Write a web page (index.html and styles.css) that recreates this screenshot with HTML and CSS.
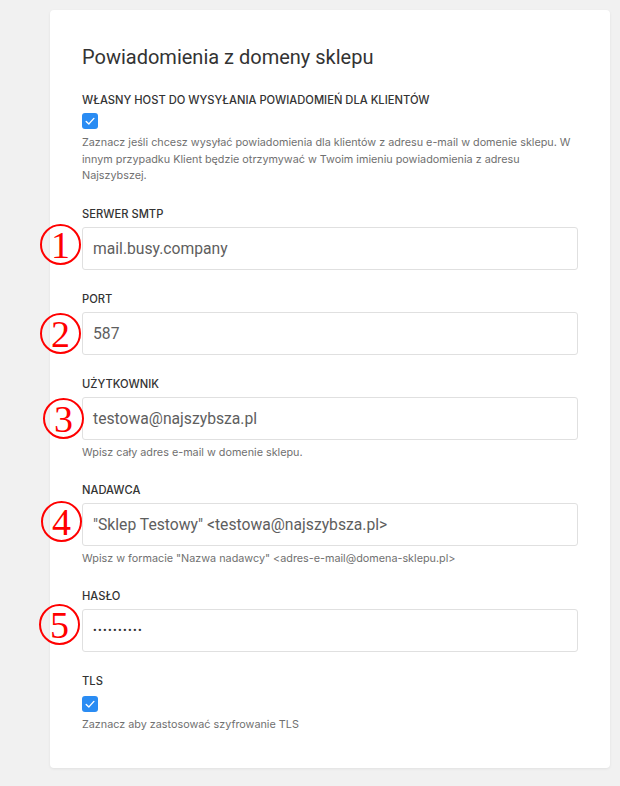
FILE: index.html
```html
<!DOCTYPE html>
<html lang="pl">
<head>
<meta charset="utf-8">
<title>Powiadomienia z domeny sklepu</title>
<link rel="stylesheet" href="styles.css">
</head>
<body>
<main class="page">
  <section class="card">
    <h1 class="title">Powiadomienia z domeny sklepu</h1>

    <div class="field">
      <div class="label">Własny host do wysyłania powiadomień dla klientów</div>
      <span class="checkbox"><svg viewBox="0 0 16 16" width="16" height="16"><path d="M4.2 8.4 L6.9 10.9 L11.9 5.4" fill="none" stroke="#fff" stroke-width="1.4" stroke-linecap="round" stroke-linejoin="round"/></svg></span>
      <p class="help help-first">Zaznacz jeśli chcesz wysyłać powiadomienia dla klientów z adresu e-mail w domenie sklepu. W innym przypadku Klient będzie otrzymywać w Twoim imieniu powiadomienia z adresu Najszybszej.</p>
    </div>

    <div class="field">
      <div class="label">Serwer SMTP</div>
      <div class="control">
        <span class="mark mark-1">1</span>
        <div class="input">mail.busy.company</div>
      </div>
    </div>

    <div class="field">
      <div class="label">Port</div>
      <div class="control">
        <span class="mark mark-2">2</span>
        <div class="input">587</div>
      </div>
    </div>

    <div class="field">
      <div class="label">Użytkownik</div>
      <div class="control">
        <span class="mark mark-3">3</span>
        <div class="input">testowa@najszybsza.pl</div>
      </div>
      <p class="help">Wpisz cały adres e-mail w domenie sklepu.</p>
    </div>

    <div class="field">
      <div class="label">Nadawca</div>
      <div class="control">
        <span class="mark mark-4">4</span>
        <div class="input">"Sklep Testowy" &lt;testowa@najszybsza.pl&gt;</div>
      </div>
      <p class="help">Wpisz w formacie "Nazwa nadawcy" &lt;adres-e-mail@domena-sklepu.pl&gt;</p>
    </div>

    <div class="field">
      <div class="label">Hasło</div>
      <div class="control">
        <span class="mark mark-5">5</span>
        <div class="input input-password">••••••••••</div>
      </div>
    </div>

    <div class="field field-last">
      <div class="label">TLS</div>
      <span class="checkbox checkbox-tls"><svg viewBox="0 0 16 16" width="16" height="16"><path d="M4.2 8.4 L6.9 10.9 L11.9 5.4" fill="none" stroke="#fff" stroke-width="1.4" stroke-linecap="round" stroke-linejoin="round"/></svg></span>
      <p class="help">Zaznacz aby zastosować szyfrowanie TLS</p>
    </div>
  </section>
</main>
</body>
</html>
```

FILE: styles.css
```css
* { box-sizing: border-box; }

html, body {
  margin: 0;
  padding: 0;
  background: #f1f1f1;
}

body {
  font-family: "Inter", "Roboto", "Liberation Sans", sans-serif;
  color: #333;
}

.page {
  padding: 10px 10px 16px 50px;
}

.card {
  width: 560px;
  background: #fff;
  border-radius: 4px;
  box-shadow: 0 1px 3px rgba(0, 0, 0, 0.07);
  padding: 33px 32px 35px 32px;
}

.title {
  margin: 0 0 21px 0;
  font-family: "Roboto", "Inter", sans-serif;
  font-size: 20px;
  line-height: 28px;
  font-weight: 400;
  color: #333;
}

.field {
  margin-bottom: 21px;
}

.field-last {
  margin-bottom: 0;
}

.label {
  font-size: 11.2px;
  line-height: 16px;
  font-weight: 500;
  text-transform: uppercase;
  color: #333;
  margin-bottom: 5px;
}

.checkbox {
  display: block;
  width: 16px;
  height: 16px;
  border-radius: 3px;
  background: #2a8cf3;
}

.checkbox svg { display: block; }

.checkbox-tls {
  margin-top: 7px;
}

.help {
  margin: 5px 0 0 0;
  font-size: 10.8px;
  line-height: 16px;
  color: #707070;
}

.help-first {
  margin-top: 6px;
  line-height: 16.5px;
}

.control {
  position: relative;
}

.input {
  height: 43px;
  border: 1px solid #e0e0e0;
  border-radius: 3px;
  background: #fff;
  padding: 0 10px;
  display: flex;
  align-items: center;
  font-family: "Roboto", "Liberation Sans", sans-serif;
  font-size: 15.7px;
  color: #5e5e5e;
}

.input-password {
  font-size: 11px;
  letter-spacing: 1.3px;
  color: #333;
}

.mark {
  position: absolute;
  width: 41px;
  height: 41px;
  border: 2px solid #f00;
  border-radius: 50%;
  color: #f00;
  font-family: "Liberation Serif", "DejaVu Serif", serif;
  font-size: 38px;
  line-height: 1;
  display: flex;
  align-items: center;
  justify-content: center;
  padding-top: 2px;
}

.mark-1 { left: -42px; top: -3px; }
.mark-2 { left: -42px; top: 1px; }
.mark-3 { left: -39px; top: 1px; }
.mark-4 { left: -41px; top: -2px; }
.mark-5 { left: -43px; top: -5px; }
```
